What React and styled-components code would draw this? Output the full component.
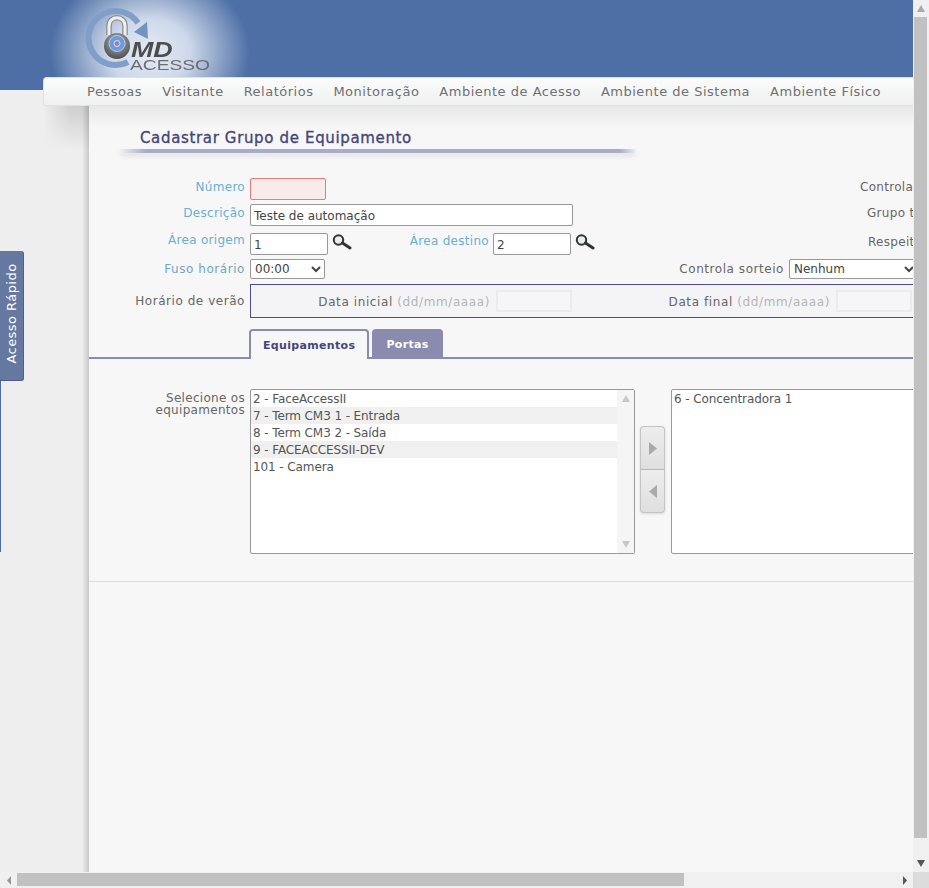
import styled, { createGlobalStyle } from 'styled-components';

const GlobalStyle = createGlobalStyle`
  html, body { margin: 0; padding: 0; height: 100%; overflow: hidden; }
  body { font-family: 'DejaVu Sans', Verdana, sans-serif; font-size: 12px; color: #666; }
`;

const menuItems = [
  'Pessoas', 'Visitante', 'Relatórios', 'Monitoração',
  'Ambiente de Acesso', 'Ambiente de Sistema', 'Ambiente Físico',
];

const leftItems = [
  '2 - FaceAccessII', '7 - Term CM3 1 - Entrada', '8 - Term CM3 2 - Saída',
  '9 - FACEACCESSII-DEV', '101 - Camera',
];

function Arrow({ dir, color = '#b5b5b5', w = 8, h = 7 }) {
  const points = {
    up: '0,10 5,0 10,10',
    down: '0,0 5,10 10,0',
    left: '10,0 0,5 10,10',
    right: '0,0 10,5 0,10',
  };
  return (
    <svg width={w} height={h} viewBox="0 0 10 10" preserveAspectRatio="none">
      <polygon points={points[dir]} fill={color} />
    </svg>
  );
}

function Magnifier() {
  return (
    <SearchIcon width="20" height="16" viewBox="0 0 20 16">
      <circle cx="6.5" cy="6" r="4.7" fill="#e8eef0" stroke="#333" strokeWidth="2" />
      <path d="M10.5 9 L18 14" stroke="#333" strokeWidth="3" strokeLinecap="round" />
    </SearchIcon>
  );
}

function Logo() {
  return (
    <LogoBox>
      <svg width="110" height="72" viewBox="0 0 110 72">
        <defs>
          <linearGradient id="shackle" x1="0" y1="0" x2="1" y2="0">
            <stop offset="0" stopColor="#8a8a8a" />
            <stop offset="0.25" stopColor="#f4f4f4" />
            <stop offset="0.75" stopColor="#f4f4f4" />
            <stop offset="1" stopColor="#8a8a8a" />
          </linearGradient>
          <radialGradient id="body" cx="0.5" cy="0.35" r="0.65">
            <stop offset="0" stopColor="#b5b5b5" />
            <stop offset="1" stopColor="#4f4f4f" />
          </radialGradient>
        </defs>
        {/* anel com seta */}
        <path d="M54 17 A27 27 0 1 0 44 56" fill="none" stroke="#7f9fc8" strokeWidth="6" />
        <polygon points="63,16 64,33 50,26" fill="#6f94c1" />
        {/* cadeado */}
        <path d="M25 29 V20 C25 9 41 9 41 20 V29" fill="none" stroke="#8d8d8d" strokeWidth="5.5" />
        <path d="M25 29 V20 C25 9 41 9 41 20 V29" fill="none" stroke="#f0f0f0" strokeWidth="3" />
        <circle cx="33" cy="40" r="13" fill="url(#body)" />
        <circle cx="33" cy="37.5" r="8" fill="#6f9ae0" stroke="#b3cbf0" strokeWidth="1" />
        <circle cx="33" cy="37.5" r="3" fill="#8a8f98" stroke="#dde" strokeWidth="1" />
      </svg>
      <LogoMd>MD</LogoMd>
      <LogoName>ACESSO</LogoName>
    </LogoBox>
  );
}

export default function App() {
  return (
    <Window>
      <GlobalStyle />
      <TopRow>
        <Viewport>
          <Page>
            <Header>
              <Logo />
              <Menu>
                {menuItems.map((item) => <MenuItem key={item}>{item}</MenuItem>)}
              </Menu>
            </Header>

            <Body>
              <Side>
                <QuickLine />
                <QuickTab><span>Acesso Rápido</span></QuickTab>
              </Side>

              <Panel>
                <TitleBlock>
                  <Title>Cadastrar Grupo de Equipamento</Title>
                  <TitleBar />
                </TitleBlock>

                <Row $top={25} $h={22}>
                  <Label $required>Número</Label>
                  <Field><TextInput $w={76} $h={22} $error /></Field>
                  <SideLabel $indent={0}>Controla acesso</SideLabel>
                </Row>
                <Row $top={4} $h={22}>
                  <Label $required>Descrição</Label>
                  <Field><TextInput $w={323} $h={22} defaultValue="Teste de automação" /></Field>
                  <SideLabel $indent={7}>Grupo temporário</SideLabel>
                </Row>
                <Row $top={7} $h={22}>
                  <Label $required $up={4}>Área origem</Label>
                  <Field>
                    <TextInput $w={78} $h={22} defaultValue="1" />
                    <Magnifier />
                    <InnerLabel $w={141} $up={3} $required>Área destino</InnerLabel>
                    <TextInput $w={78} $h={22} defaultValue="2" />
                    <Magnifier />
                  </Field>
                  <SideLabel $indent={8}>Respeita</SideLabel>
                </Row>
                <Row $top={4} $h={20}>
                  <Label $required $wide $up={0} $muted>Fuso horário</Label>
                  <Field>
                    <Select $w={75} defaultValue="00:00"><option>00:00</option></Select>
                    <InnerLabel $w={463} $wide $up={0}>Controla sorteio</InnerLabel>
                    <Select $w={129} defaultValue="Nenhum"><option>Nenhum</option></Select>
                  </Field>
                </Row>
                <Row $top={5} $h={34}>
                  <Label $wide $up={0}>Horário de verão</Label>
                  <DstBox>
                    <DstLabel $w={245}>Data inicial <Hint>(dd/mm/aaaa)</Hint></DstLabel>
                    <DstInput />
                    <DstLabel $w={264}>Data final <Hint>(dd/mm/aaaa)</Hint></DstLabel>
                    <DstInput />
                  </DstBox>
                </Row>

                <Tabs>
                  <Tab $active>Equipamentos</Tab>
                  <Tab>Portas</Tab>
                </Tabs>

                <Transfer>
                  <TransferLabel>Selecione os equipamentos</TransferLabel>
                  <ListBox $w={385}>
                    <ListRows>
                      {leftItems.map((item, i) => (
                        <ListRow key={item} $alt={i % 2 === 1}>{item}</ListRow>
                      ))}
                    </ListRows>
                    <ListScroll>
                      <Arrow dir="up" color="#c8c8c8" />
                      <Arrow dir="down" color="#c8c8c8" />
                    </ListScroll>
                  </ListBox>
                  <MoveButtons>
                    <MoveButton><Arrow dir="right" color="#aaa" w={8} h={13} /></MoveButton>
                    <MoveButton><Arrow dir="left" color="#aaa" w={8} h={13} /></MoveButton>
                  </MoveButtons>
                  <ListBox $w={385}>
                    <ListRows><ListRow>6 - Concentradora 1</ListRow></ListRows>
                  </ListBox>
                </Transfer>
                <Divider />
              </Panel>
            </Body>
          </Page>
        </Viewport>

        <VScroll>
          <ScrollEnd><Arrow dir="up" color="#aaa" /></ScrollEnd>
          <VTrack><VThumb /></VTrack>
          <ScrollEnd><Arrow dir="down" color="#555" /></ScrollEnd>
        </VScroll>
      </TopRow>

      <HScroll>
        <HEnd><Arrow dir="left" color="#999" w={4} h={9} /></HEnd>
        <HTrack><HThumb /></HTrack>
        <HEnd><Arrow dir="right" color="#555" w={4} h={9} /></HEnd>
        <Corner />
      </HScroll>
    </Window>
  );
}

// --- styled-components ---

const Window = styled.div`
  width: 929px; height: 888px;
  display: flex; flex-direction: column;
  overflow: hidden; background: #f0f0f0;
`;

const TopRow = styled.div`
  display: flex; height: 872px;
`;

const Viewport = styled.div`
  width: 913px; height: 872px; overflow: hidden;
  background: #eeeeee;
`;

const Page = styled.div`
  width: 1203px; height: 872px;
  display: flex; flex-direction: column;
`;

const Header = styled.header`
  height: 90px; flex: none;
  padding-top: 77px; box-sizing: border-box;
  background:
    radial-gradient(ellipse 100px 84px at 150px 52px, #e6ebf4 0%, #cdd8ea 40%, rgba(77,111,165,0) 100%),
    #4d6fa5;
  position: relative;
`;

const LogoBox = styled.div`
  position: absolute; left: 84px; top: 6px;
  width: 130px; height: 70px;
`;

const LogoMd = styled.span`
  position: absolute; left: 47px; top: 31px;
  font: italic bold 22px 'Liberation Sans', sans-serif;
  color: #4d4d4f;
  transform: scaleX(1.22); transform-origin: left center;
`;

const LogoName = styled.span`
  position: absolute; left: 46px; top: 50px;
  font: 15px 'Liberation Sans', sans-serif;
  color: #6b6d72;
  transform: scaleX(1.28); transform-origin: left center;
`;

const Menu = styled.nav`
  position: relative;
  margin-left: 43px; height: 29px;
  box-sizing: border-box;
  padding-left: 43px;
  display: flex; align-items: center; gap: 20px;
  background: linear-gradient(#fbfcfc, #eff1f1);
  border: 1px solid #dfe3e8; border-right: 0;
  border-radius: 4px 0 0 4px;
`;

const MenuItem = styled.span`
  font-size: 13px; color: #707070; white-space: nowrap;
  letter-spacing: 0.5px;
`;

const Body = styled.div`
  flex: 1; display: flex; margin-top: 16px;
  min-height: 0;
`;

const Side = styled.aside`
  width: 89px; flex: none; position: relative;
  background:
    linear-gradient(to right, rgba(0,0,0,0) 82px, rgba(0,0,0,0.16) 89px),
    #eeeeee;
  &::before {
    content: ''; position: absolute; left: 43px; top: 0; width: 46px; height: 44px;
    background: linear-gradient(to bottom, rgba(0,0,0,0.13), rgba(0,0,0,0));
    -webkit-mask-image: linear-gradient(to right, transparent, #000 60%);
    mask-image: linear-gradient(to right, transparent, #000 60%);
  }
`;

const QuickLine = styled.div`
  position: absolute; left: 0; top: 145px;
  width: 1px; height: 301px; background: #4d6fa5;
`;

const QuickTab = styled.div`
  position: absolute; left: 0; top: 145px;
  width: 24px; height: 130px; box-sizing: border-box;
  padding-bottom: 4px;
  display: flex; align-items: center; justify-content: center;
  background: #65789f;
  border-right: 1px solid #4d5f92; border-bottom: 1px solid #4d5f92;
  border-radius: 0 3px 3px 0;
  color: #fff; font-size: 13px;
  span { display: block; white-space: nowrap; transform: rotate(-90deg); letter-spacing: 0.45px; }
`;

const Panel = styled.main`
  flex: 1; min-width: 0;
  background: linear-gradient(#e9e8e9, #f8f7f8 22px);
  display: flex; flex-direction: column;
`;

const TitleBlock = styled.div`
  padding: 23px 0 0 31px;
  width: 515px;
`;

const Title = styled.h1`
  margin: 0 0 0 20px;
  font-size: 15px; line-height: 18px; font-weight: normal;
  color: #44477a; white-space: nowrap;
  -webkit-text-stroke: 0.35px #44477a;
  letter-spacing: 0.65px;
`;

const TitleBar = styled.div`
  margin-top: 2px; height: 4px; width: 515px;
  background: linear-gradient(to right, #f0f0f5, #a9abcb 5%, #a9abcb 97%, #e9e9f1);
  box-shadow: 0 3px 5px rgba(0,0,0,0.1);
`;

const Row = styled.div`
  display: grid; grid-template-columns: 156px 605px auto; column-gap: 5px;
  align-items: center;
  margin-top: ${(p) => p.$top}px; height: ${(p) => p.$h}px;
`;

const Label = styled.label`
  text-align: right; white-space: nowrap; font-size: 12px;
  letter-spacing: ${(p) => (p.$wide ? '0.55px' : '0.3px')};
  color: ${(p) => (p.$muted ? '#6da5c6' : p.$required ? '#68aed4' : '#666')};
  position: relative; top: ${(p) => (p.$up === undefined ? -2 : -p.$up)}px;
`;

const SideLabel = styled.span`
  padding-left: ${(p) => p.$indent}px;
  white-space: nowrap; font-size: 12px; letter-spacing: 0.3px; color: #666;
  position: relative; top: -2px;
`;

const Field = styled.div`
  display: flex; align-items: center; white-space: nowrap;
`;

const TextInput = styled.input`
  flex: none;
  width: ${(p) => p.$w}px; height: ${(p) => p.$h}px; box-sizing: border-box;
  border: 1px solid ${(p) => (p.$error ? '#e07d7d' : '#999')};
  border-radius: 2px; padding: 2px 3px 0;
  background: ${(p) => (p.$error ? '#f7eceb' : '#fff')};
  font: 12px 'DejaVu Sans', sans-serif; color: #444; outline: none;
`;

const SearchIcon = styled.svg`
  flex: none; margin: -4px 0 0 4px;
`;

const InnerLabel = styled.span`
  flex: none; box-sizing: border-box;
  width: ${(p) => p.$w}px; padding-right: 4px; text-align: right;
  font-size: 12px;
  letter-spacing: ${(p) => (p.$wide ? '0.55px' : '0.3px')};
  color: ${(p) => (p.$required ? '#68aed4' : '#666')};
  position: relative; top: ${(p) => -p.$up}px;
`;

const Select = styled.select`
  flex: none; width: ${(p) => p.$w}px; height: 20px; box-sizing: border-box;
  margin-left: 1px;
  &:first-child { margin-left: 0; }
  border: 1px solid #999; border-radius: 2px; background: #fff; padding: 0;
  font: 12px 'DejaVu Sans', sans-serif; color: #444;
`;

const DstBox = styled.div`
  grid-column: 2 / span 2;
  height: 34px; box-sizing: border-box;
  display: flex; align-items: center;
  border: 1px solid #4f4c8f; background: #f4f4f7;
`;

const DstLabel = styled.span`
  flex: none; box-sizing: border-box; width: ${(p) => p.$w}px;
  padding-right: 6px; text-align: right;
  font-size: 12px; letter-spacing: 0.6px; color: #666; white-space: nowrap;
  position: relative; top: 1px;
`;

const Hint = styled.span`
  color: #b5b5b5;
`;

const DstInput = styled.div`
  flex: none; width: 76px; height: 22px; box-sizing: border-box;
  border: 2px solid #ebebeb; background: #f6f6f8;
`;

const Tabs = styled.div`
  display: flex; gap: 3px; align-items: flex-end;
  margin-top: 11px; padding-left: 160px;
  height: 28px; flex: none;
  border-bottom: 2px solid #8a8bae;
`;

const Tab = styled.div`
  box-sizing: border-box; padding: ${(p) => (p.$active ? '0 12px' : '2px 14px 0')};
  height: ${(p) => (p.$active ? '30px' : '28px')};
  margin-bottom: ${(p) => (p.$active ? '-2px' : '0')};
  display: flex; align-items: center;
  font-size: 11px; font-weight: bold; letter-spacing: 0.33px;
  border-radius: 4px 4px 0 0;
  color: ${(p) => (p.$active ? '#44477a' : '#fff')};
  background: ${(p) => (p.$active ? '#f8f7f8' : '#8a8bae')};
  border: ${(p) => (p.$active ? '2px solid #8a8bae' : '0')};
  border-bottom: 0;
`;

const Transfer = styled.div`
  display: flex; align-items: flex-start; flex: none;
  margin-top: 30px; height: 165px;
`;

const TransferLabel = styled.div`
  width: 156px; margin-right: 5px; flex: none;
  padding-top: 3px;
  text-align: right; font-size: 12px; line-height: 12px; letter-spacing: 0.3px; color: #666;
`;

const ListBox = styled.div`
  flex: none; display: flex;
  width: ${(p) => p.$w}px; height: 165px; box-sizing: border-box;
  border: 1px solid #999; border-radius: 2px; background: #fff;
`;

const ListRows = styled.div`
  flex: 1; min-width: 0;
`;

const ListRow = styled.div`
  height: 17px; line-height: 19px; padding-left: 2px;
  font-size: 12px; color: #555; white-space: nowrap; letter-spacing: -0.1px;
  background: ${(p) => (p.$alt ? '#f0f0f0' : 'transparent')};
`;

const ListScroll = styled.div`
  width: 17px; flex: none; background: #f5f5f5;
  display: flex; flex-direction: column; justify-content: space-between; align-items: center;
  padding: 5px 0 5px;
  box-sizing: border-box;
`;

const MoveButtons = styled.div`
  flex: none; width: 25px; margin: 37px 6px 0 5px;
  display: flex; flex-direction: column;
  filter: drop-shadow(0 1px 1px rgba(0,0,0,0.12));
`;

const MoveButton = styled.div`
  height: 44px; box-sizing: border-box;
  display: flex; align-items: center; justify-content: center;
  border: 1px solid #c4c4c4;
  background: linear-gradient(#eeeded, #dfdfdf);
  &:first-child { border-radius: 4px 4px 0 0; border-bottom-color: #b8b8b8; }
  &:last-child { border-radius: 0 0 4px 4px; border-top: 0; height: 43px; }
`;

const Divider = styled.div`
  margin-top: 27px; height: 1px; background: #dedede;
`;

const VScroll = styled.div`
  width: 16px; flex: none; background: #f0f0f0;
  display: flex; flex-direction: column;
`;

const ScrollEnd = styled.div`
  height: 17px; flex: none;
  display: flex; align-items: center; justify-content: center;
`;

const VTrack = styled.div`
  flex: 1; padding: 0 2px 0 1px;
  display: flex; flex-direction: column;
`;

const VThumb = styled.div`
  flex: none; height: 821px; background: #c1c1c1;
`;

const HScroll = styled.div`
  height: 16px; display: flex; background: #f0f0f0;
`;

const HEnd = styled.div`
  width: 17px; flex: none;
  display: flex; align-items: center; justify-content: center;
`;

const HTrack = styled.div`
  flex: 1; padding: 1px 0 2px;
  display: flex;
`;

const HThumb = styled.div`
  width: 667px; background: #c1c1c1;
`;

const Corner = styled.div`
  width: 16px; flex: none; background: #dcdcdc;
`;
